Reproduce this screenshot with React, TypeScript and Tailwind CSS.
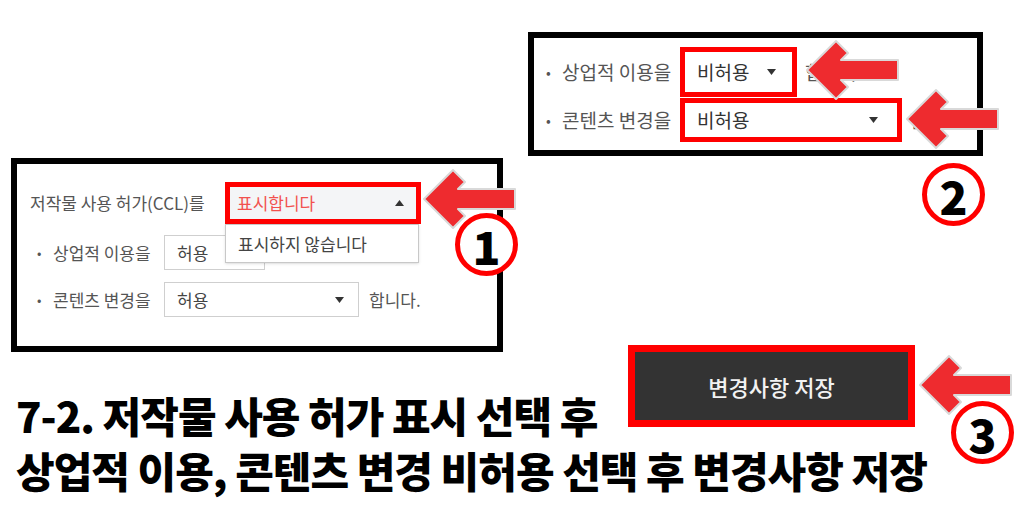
import React from "react";

const panelFont = { fontFamily: '"Noto Sans CJK KR", "Noto Sans", sans-serif' };

function Arrow({ left, top }: { left: number; top: number }) {
  return (
    <svg
      className="absolute"
      style={{ left: left - 2, top: top - 2 }}
      width={96}
      height={64}
      viewBox="-2 -2 96 64"
    >
      <polygon
        points="0,30 29,1 41,13 34,20 91,20 91,40 34,40 41,47 29,59"
        fill="#ee2b2f"
        stroke="#d9d9d9"
        strokeWidth={2}
        strokeLinejoin="round"
      />
    </svg>
  );
}

function Circle({ left, top, n }: { left: number; top: number; n: string }) {
  return (
    <div
      className="absolute w-[63px] h-[63px] rounded-full border-[5px] border-[#ff0000] bg-white flex items-center justify-center"
      style={{ left, top }}
    >
      <span
        className="text-[46px] leading-none font-black text-black"
        style={{ fontFamily: '"Noto Sans CJK KR", "DejaVu Sans", sans-serif' }}
      >
        {n}
      </span>
    </div>
  );
}

function Caret({ up }: { up?: boolean }) {
  return (
    <svg width="9" height="6" viewBox="0 0 9 6">
      {up ? <polygon points="0,6 9,6 4.5,0" fill="#333" /> : <polygon points="0,0 9,0 4.5,6" fill="#333" />}
    </svg>
  );
}

export default function App() {
  return (
    <div className="relative w-[1024px] h-[512px] bg-white overflow-hidden" style={panelFont}>
      {/* Panel 1 */}
      <div className="absolute left-[11px] top-[158px] w-[492px] h-[194px] border-[6px] border-black bg-white text-[#555] text-[17px] pt-[18px] flex flex-col">
        <div className="flex items-center h-[42px]">
          <span className="w-[208px] pl-[13px]">저작물 사용 허가(CCL)를</span>
          <div className="relative">
            <div className="w-[196px] h-[42px] border-[5px] border-[#ff0000] bg-[#f4f5f7] flex items-center justify-between pl-[7px] pr-[12px]">
              <span className="text-[#f2514f]">표시합니다</span>
              <Caret up />
            </div>
            {/* open dropdown list */}
            <div className="absolute left-0 top-[42px] z-10 w-[194px] h-[39px] border border-[#c8c8c8] bg-white shadow-sm flex items-center pl-[12px] text-[#444]">
              표시하지 않습니다
            </div>
          </div>
        </div>
        <div className="flex items-center h-[35px] mt-[11px]">
          <span className="w-[36px] pl-[20px] text-[13px]">•</span>
          <span className="w-[111px]">상업적 이용을</span>
          <div className="w-[101px] h-[35px] border border-[#cfcfcf] bg-white flex items-center pl-[12px] text-[#444]">
            허용
          </div>
        </div>
        <div className="flex items-center h-[35px] mt-[12px]">
          <span className="w-[36px] pl-[20px] text-[13px]">•</span>
          <span className="w-[111px]">콘텐츠 변경을</span>
          <div className="w-[195px] h-[35px] border border-[#cfcfcf] bg-white flex items-center justify-between pl-[12px] pr-[14px] text-[#444]">
            <span>허용</span>
            <Caret />
          </div>
          <span className="ml-[10px]">합니다.</span>
        </div>
      </div>

      {/* Panel 2 */}
      <div className="absolute left-[528px] top-[32px] w-[455px] h-[124px] border-[6px] border-black bg-white text-[#555] text-[19px] pt-[9px] flex flex-col">
        <div className="flex items-center h-[50px]">
          <span className="w-[28px] pl-[12px] text-[14px]">•</span>
          <span className="w-[118px]">상업적 이용을</span>
          <div className="w-[117px] h-[50px] border-[5px] border-[#ff0000] bg-white flex items-center justify-between pl-[12px] pr-[16px] text-[#333]">
            <span>비허용</span>
            <Caret />
          </div>
          <span className="ml-[8px]">합니다.</span>
        </div>
        <div className="flex items-center h-[44px] mt-[1px]">
          <span className="w-[28px] pl-[12px] text-[14px]">•</span>
          <span className="w-[118px]">콘텐츠 변경을</span>
          <div className="w-[222px] h-[44px] border-[5px] border-[#ff0000] bg-white flex items-center justify-between pl-[12px] pr-[19px] text-[#333]">
            <span>비허용</span>
            <Caret />
          </div>
          <span className="ml-[8px]">합니다.</span>
        </div>
      </div>

      {/* Save button */}
      <div className="absolute left-[628px] top-[345px] w-[287px] h-[82px] border-[7px] border-[#ff0000] bg-[#333333] flex items-center justify-center">
        <span className="text-[22px] font-medium text-[#f2f2f2]">변경사항 저장</span>
      </div>

      {/* Arrows */}
      <Arrow left={424} top={169} />
      <Arrow left={807} top={40} />
      <Arrow left={907} top={89} />
      <Arrow left={920} top={355} />

      {/* Circles */}
      <Circle left={455} top={213} n="1" />
      <Circle left={922} top={163} n="2" />
      <Circle left={951} top={401} n="3" />

      {/* Title */}
      <div
        className="absolute left-[16px] top-[387px] text-black font-black text-[42px] leading-[55px] tracking-[-1px]"
        style={{ fontFamily: '"Noto Sans CJK KR", sans-serif' }}
      >
        <div>7-2. 저작물 사용 허가 표시 선택 후</div>
        <div>상업적 이용, 콘텐츠 변경 비허용 선택 후 변경사항 저장</div>
      </div>
    </div>
  );
}
